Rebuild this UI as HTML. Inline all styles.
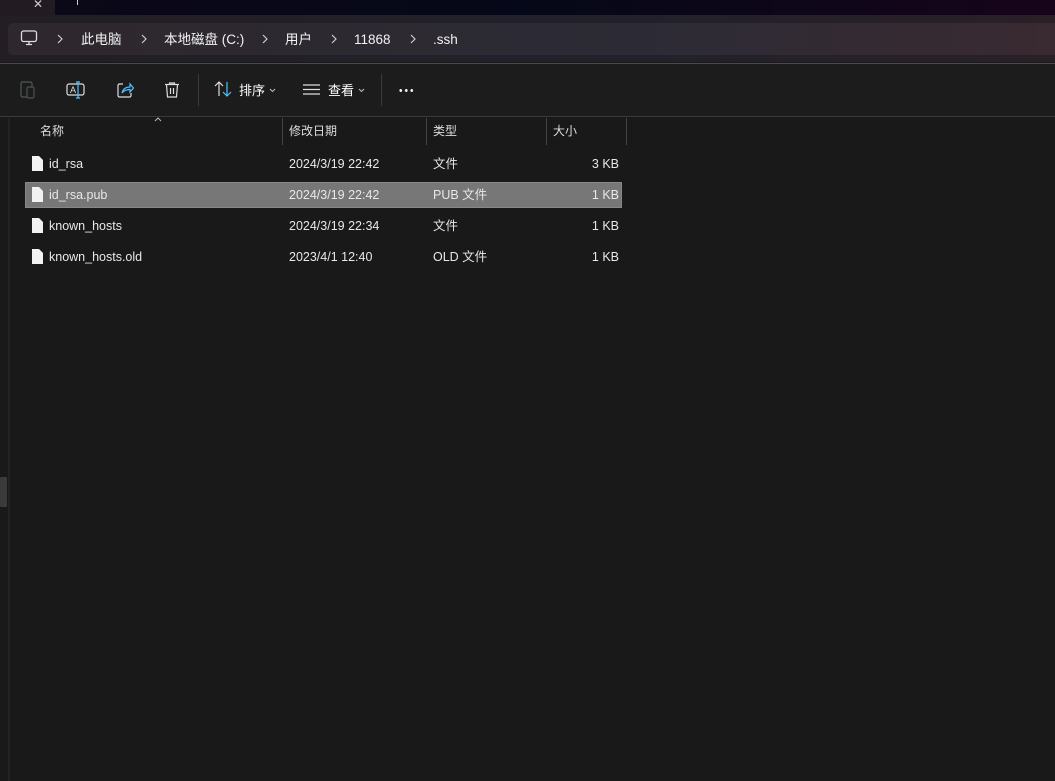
<!DOCTYPE html><html><head><meta charset="utf-8"><style>
*{margin:0;padding:0;box-sizing:border-box}
body{width:1055px;height:781px;overflow:hidden;background:#191919;font-family:"Segoe UI","Liberation Sans","Noto Sans CJK SC",sans-serif;color:#fff;font-size:12px;line-height:16px;position:relative}
.abs{position:absolute}
.title{left:0;top:0;width:1055px;height:15px;background:linear-gradient(90deg,#0c0818 0%,#050818 50%,#17041a 100%)}
.tab{left:0;top:0;width:55px;height:15px;background:#221c22}
.addr{left:0;top:15px;width:1055px;height:47px;background:linear-gradient(90deg,#221e24,#22212b 60%,#2a1f27)}
.box{left:8px;top:23px;width:1047px;height:32px;background:linear-gradient(90deg,#2e272d,#2c2b35 60%,#3a2a31);border-radius:5px 0 0 5px}
.crumb{top:31px;font-size:13.5px;color:#f2f2f2;line-height:17px}
.sep{top:34px}
.tool{left:0;top:63px;width:1055px;height:54px;background:#1c1c1c;border-top:1px solid #4a4a4a;border-bottom:1px solid #3a3a3a}
.vl{width:1px;background:#3a3a3a}
.hdr{top:123px;font-size:12px;color:#ddd}
.row{font-size:12.5px;color:#e8e8e8}
.cell{position:absolute;top:0;line-height:16px}
</style></head><body>
<div class="abs title"></div><div class="abs tab"></div>
<div class="abs" style="left:33px;top:-4px;color:#ccc;font-size:12px">✕</div>
<div class="abs" style="left:77px;top:0;width:1px;height:5px;background:#ccc"></div>
<div class="abs addr"></div><div class="abs box"></div>
<svg class="abs" style="left:20px;top:30px" width="18" height="16" viewBox="0 0 18 16"><rect x="1.5" y="1" width="15" height="10.5" rx="2" fill="none" stroke="#ddd" stroke-width="1.3"/><path d="M6 14.5h6M9 11.5v3" stroke="#ddd" stroke-width="1.3"/></svg>
<svg class="abs sep" style="left:57px" width="6" height="10"><path d="M1 1l4 4-4 4" fill="none" stroke="#ccc" stroke-width="1.2"/></svg>
<div class="abs crumb" style="left:81px">此电脑</div>
<svg class="abs sep" style="left:141px" width="6" height="10"><path d="M1 1l4 4-4 4" fill="none" stroke="#ccc" stroke-width="1.2"/></svg>
<div class="abs crumb" style="left:164px">本地磁盘 (C:)</div>
<svg class="abs sep" style="left:262px" width="6" height="10"><path d="M1 1l4 4-4 4" fill="none" stroke="#ccc" stroke-width="1.2"/></svg>
<div class="abs crumb" style="left:285px">用户</div>
<svg class="abs sep" style="left:331px" width="6" height="10"><path d="M1 1l4 4-4 4" fill="none" stroke="#ccc" stroke-width="1.2"/></svg>
<div class="abs crumb" style="left:354px">11868</div>
<svg class="abs sep" style="left:410px" width="6" height="10"><path d="M1 1l4 4-4 4" fill="none" stroke="#ccc" stroke-width="1.2"/></svg>
<div class="abs crumb" style="left:433px">.ssh</div>
<div class="abs tool"></div>
<svg class="abs" style="left:19px;top:80px" width="18" height="20" viewBox="0 0 18 20"><rect x="2" y="2" width="11" height="15" rx="1.5" fill="none" stroke="#555" stroke-width="1.2"/><rect x="8" y="7" width="7" height="11" rx="1.5" fill="#1c1c1c" stroke="#455" stroke-width="1.2"/></svg>
<svg class="abs" style="left:66px;top:81px" width="20" height="18" viewBox="0 0 20 18"><rect x="1" y="3" width="17" height="11" rx="2" fill="none" stroke="#ddd" stroke-width="1.2"/><text x="4" y="12" font-size="9" fill="#ddd" font-family="Liberation Sans">A</text><path d="M12 1v16M10 1h4M10 17h4" stroke="#4cc2ff" stroke-width="1.2"/></svg>
<svg class="abs" style="left:116px;top:81px" width="18" height="18" viewBox="0 0 18 18"><path d="M7 3H3.5A1.5 1.5 0 0 0 2 4.5v10A1.5 1.5 0 0 0 3.5 16h10a1.5 1.5 0 0 0 1.5-1.5V12" fill="none" stroke="#ddd" stroke-width="1.2"/><path d="M6 12c1-4 4-6 8-6V3l3.5 4-3.5 4V8.5c-3 0-6 1-8 3.5z" fill="none" stroke="#4cc2ff" stroke-width="1.2"/></svg>
<svg class="abs" style="left:164px;top:81px" width="16" height="18" viewBox="0 0 16 18"><path d="M1 3.5h14M5.5 3.5V2h5v1.5M2.5 3.5l1 12.5h9l1-12.5M6.5 7v6M9.5 7v6" fill="none" stroke="#ddd" stroke-width="1.2"/></svg>
<div class="abs vl" style="left:198px;top:74px;height:32px"></div>
<svg class="abs" style="left:214px;top:81px" width="18" height="16" viewBox="0 0 18 16"><path d="M5 15V1M1 5l4-4 4 4" fill="none" stroke="#ddd" stroke-width="1.2"/><path d="M13 1v14M9 11l4 4 4-4" fill="none" stroke="#4cc2ff" stroke-width="1.2"/></svg>
<div class="abs" style="left:239px;top:82px;font-size:13px;line-height:17px">排序</div>
<svg class="abs" style="left:269px;top:88px" width="7" height="5"><path d="M1 1l2.5 2.5L6 1" fill="none" stroke="#bbb" stroke-width="1"/></svg>
<svg class="abs" style="left:303px;top:84px" width="17" height="11"><path d="M0 1h17M0 5.5h17M0 10h17" stroke="#ddd" stroke-width="1.2"/></svg>
<div class="abs" style="left:328px;top:82px;font-size:13px;line-height:17px">查看</div>
<svg class="abs" style="left:358px;top:88px" width="7" height="5"><path d="M1 1l2.5 2.5L6 1" fill="none" stroke="#bbb" stroke-width="1"/></svg>
<div class="abs vl" style="left:381px;top:74px;height:32px"></div>
<div class="abs" style="left:398px;top:89px;width:16px;height:3px;background:radial-gradient(circle,#eee 1.3px,transparent 1.6px) 0 0/5.5px 3px repeat-x"></div>
<div class="abs" style="left:8px;top:118px;width:2px;height:663px;background:#232323"></div>
<div class="abs" style="left:0;top:477px;width:7px;height:30px;background:#3a3a3a;border-radius:1px"></div>
<svg class="abs" style="left:154px;top:117px" width="8" height="5"><path d="M1 4l3-3 3 3" fill="none" stroke="#bbb" stroke-width="1"/></svg>
<div class="abs vl" style="left:282px;top:118px;height:27px;background:#444"></div>
<div class="abs vl" style="left:426px;top:118px;height:27px;background:#444"></div>
<div class="abs vl" style="left:546px;top:118px;height:27px;background:#444"></div>
<div class="abs vl" style="left:626px;top:118px;height:27px;background:#444"></div>
<div class="abs hdr" style="left:40px">名称</div>
<div class="abs hdr" style="left:289px">修改日期</div>
<div class="abs hdr" style="left:433px">类型</div>
<div class="abs hdr" style="left:553px">大小</div>
<div class="abs" style="left:25px;top:182px;width:597px;height:26px;background:#777;border:1px solid #888"></div>
<div class="abs row" style="left:0;top:156px;width:640px;height:20px"><svg class="cell" style="left:32px;top:0" width="11" height="15"><path d="M0 0h7l4 4v11H0z" fill="#f2f2f2"/></svg><span class="cell" style="left:49px">id_rsa</span><span class="cell" style="left:289px">2024/3/19 22:42</span><span class="cell" style="left:433px">文件</span><span class="cell" style="right:21px">3 KB</span></div>
<div class="abs row" style="left:0;top:187px;width:640px;height:20px"><svg class="cell" style="left:32px;top:0" width="11" height="15"><path d="M0 0h7l4 4v11H0z" fill="#f2f2f2"/></svg><span class="cell" style="left:49px">id_rsa.pub</span><span class="cell" style="left:289px">2024/3/19 22:42</span><span class="cell" style="left:433px">PUB 文件</span><span class="cell" style="right:21px">1 KB</span></div>
<div class="abs row" style="left:0;top:218px;width:640px;height:20px"><svg class="cell" style="left:32px;top:0" width="11" height="15"><path d="M0 0h7l4 4v11H0z" fill="#f2f2f2"/></svg><span class="cell" style="left:49px">known_hosts</span><span class="cell" style="left:289px">2024/3/19 22:34</span><span class="cell" style="left:433px">文件</span><span class="cell" style="right:21px">1 KB</span></div>
<div class="abs row" style="left:0;top:249px;width:640px;height:20px"><svg class="cell" style="left:32px;top:0" width="11" height="15"><path d="M0 0h7l4 4v11H0z" fill="#f2f2f2"/></svg><span class="cell" style="left:49px">known_hosts.old</span><span class="cell" style="left:289px">2023/4/1 12:40</span><span class="cell" style="left:433px">OLD 文件</span><span class="cell" style="right:21px">1 KB</span></div>
</body></html>
